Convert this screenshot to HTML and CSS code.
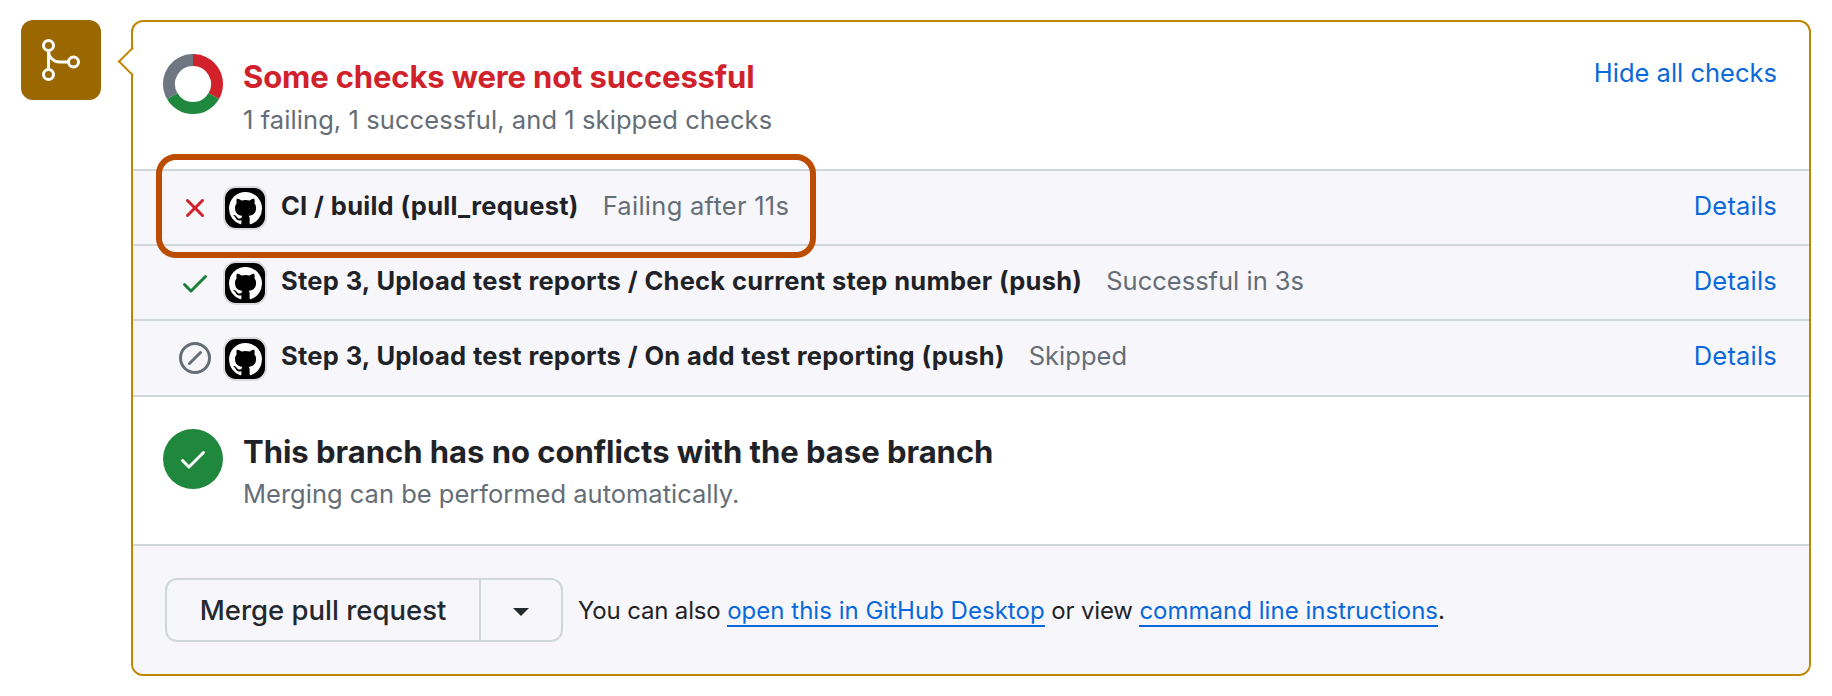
FILE: index.html
```html
<!DOCTYPE html>
<html lang="en">
<head>
<meta charset="utf-8">
<title>Pull request checks</title>
<link rel="stylesheet" href="styles.css">
</head>
<body>
<svg class="defs" aria-hidden="true">
  <symbol id="mark" viewBox="0 0 16 16"><path d="M8 0c4.42 0 8 3.58 8 8a8.013 8.013 0 0 1-5.45 7.59c-.4.08-.55-.17-.55-.38 0-.27.01-1.13.01-2.2 0-.75-.25-1.23-.54-1.48 1.78-.2 3.65-.88 3.65-3.95 0-.88-.31-1.59-.82-2.15.08-.2.36-1.02-.08-2.12 0 0-.67-.22-2.2.82-.64-.18-1.32-.27-2-.27-.68 0-1.36.09-2 .27-1.53-1.03-2.2-.82-2.2-.82-.44 1.1-.16 1.92-.08 2.12-.51.56-.82 1.28-.82 2.15 0 3.06 1.86 3.75 3.64 3.95-.23.2-.44.55-.51 1.07-.46.21-1.61.55-2.33-.66-.15-.24-.6-.83-1.23-.82-.67.01-.27.38.01.53.34.19.73.9.82 1.13.16.45.68 1.31 2.69.94 0 .67.01 1.3.01 1.49 0 .21-.15.45-.55.38A7.995 7.995 0 0 1 0 8c0-4.42 3.58-8 8-8Z"/></symbol>
  <symbol id="check" viewBox="0 0 16 16"><path d="M13.78 4.22a.75.75 0 0 1 0 1.06l-7.25 7.25a.75.75 0 0 1-1.06 0L2.22 9.28a.751.751 0 0 1 .018-1.042.751.751 0 0 1 1.042-.018L6 10.94l6.72-6.72a.75.75 0 0 1 1.06 0Z"/></symbol>
  <symbol id="x" viewBox="0 0 16 16"><path d="M3.72 3.72a.75.75 0 0 1 1.06 0L8 6.94l3.22-3.22a.749.749 0 0 1 1.275.326.749.749 0 0 1-.215.734L9.06 8l3.22 3.22a.749.749 0 0 1-.326 1.275.749.749 0 0 1-.734-.215L8 9.06l-3.22 3.22a.751.751 0 0 1-1.042-.018.751.751 0 0 1-.018-1.042L6.94 8 3.72 4.78a.75.75 0 0 1 0-1.06Z"/></symbol>
  <symbol id="skip" viewBox="0 0 16 16"><path d="M8 0a8 8 0 1 1 0 16A8 8 0 0 1 8 0ZM1.5 8a6.5 6.5 0 1 0 13 0 6.5 6.5 0 0 0-13 0Zm9.78-2.22-5.5 5.5a.749.749 0 0 1-1.275-.326.749.749 0 0 1 .215-.734l5.5-5.5a.751.751 0 0 1 1.042.018.751.751 0 0 1 .018 1.042Z"/></symbol>
</svg>
<main class="merge">
  <div class="badge">
    <svg class="badge-icon" viewBox="0 0 24 24"><circle cx="5.75" cy="4.75" r="2.5"/><circle cx="5.75" cy="19.25" r="2.5"/><circle cx="18.25" cy="13" r="2.5"/><path d="M5.75 16.5V7.5a5.5 5.5 0 0 0 5.5 5.5h4.25"/></svg>
  </div>
  <section class="panel">
    <header class="summary">
      <svg class="donut" viewBox="0 0 60 60">
        <path class="seg-fail" d="M30 6A24 24 0 0 1 50.78 42"/>
        <path class="seg-ok" d="M50.78 42A24 24 0 0 1 9.22 42"/>
        <path class="seg-skip" d="M9.22 42A24 24 0 0 1 30 6"/>
      </svg>
      <div class="summary-text">
        <h2 class="title title-fail">Some checks were not successful</h2>
        <p class="sub sub-checks">1 failing, 1 successful, and 1 skipped checks</p>
      </div>
      <a class="link toggle">Hide all checks</a>
    </header>
    <ul class="checks">
      <li class="check">
        <svg class="state fail"><use href="#x"/></svg>
        <span class="app"><svg class="mark"><use href="#mark"/></svg></span>
        <strong class="name">CI / build (pull_request)</strong>
        <span class="note note-fail">Failing after 11s</span>
        <a class="link details">Details</a>
        <span class="highlight"></span>
      </li>
      <li class="check">
        <svg class="state ok"><use href="#check"/></svg>
        <span class="app"><svg class="mark"><use href="#mark"/></svg></span>
        <strong class="name">Step 3, Upload test reports / Check current step number (push)</strong>
        <span class="note">Successful in 3s</span>
        <a class="link details">Details</a>
      </li>
      <li class="check">
        <svg class="state skipped"><use href="#skip"/></svg>
        <span class="app"><svg class="mark"><use href="#mark"/></svg></span>
        <strong class="name">Step 3, Upload test reports / On add test reporting (push)</strong>
        <span class="note">Skipped</span>
        <a class="link details">Details</a>
      </li>
    </ul>
    <div class="summary">
      <span class="disc"><svg class="disc-icon"><use href="#check"/></svg></span>
      <div class="summary-text">
        <h2 class="title title-branch">This branch has no conflicts with the base branch</h2>
        <p class="sub sub-merge">Merging can be performed automatically.</p>
      </div>
    </div>
    <footer class="actions">
      <div class="split">
        <button class="merge-btn">Merge pull request</button>
        <button class="menu-btn" aria-label="Select merge method"><svg class="caret" viewBox="0 0 16 8"><path d="M0 0h16L8 8z"/></svg></button>
      </div>
      <p class="hint">You can also <a class="link inline">open this in GitHub Desktop</a> or view <a class="link inline">command line instructions</a>.</p>
    </footer>
  </section>
</main>
</body>
</html>
```
FILE: styles.css
```css
* { box-sizing: border-box; }
body {
  margin: 0;
  background: #fff;
  color: #1f2328;
  font-family: Inter, "Liberation Sans", sans-serif;
  font-size: 25.5px;
}
h2, p, ul { margin: 0; padding: 0; }
svg { display: block; flex: none; fill: currentColor; }
.defs { position: absolute; width: 0; height: 0; }
.merge {
  display: flex;
  align-items: flex-start;
  gap: 30px;
  padding: 20px 21px;
}
.badge {
  display: grid;
  place-items: center;
  flex: none;
  width: 80px;
  height: 80px;
  border-radius: 12px;
  background: #9a6700;
}
.badge-icon { width: 48px; height: 48px; fill: none; stroke: #fff; stroke-width: 1.5; }
.panel {
  position: relative;
  flex: 1;
  height: 656px;
  border: 2px solid #bf8700;
  border-radius: 12px;
}
.panel::before {
  content: "";
  position: absolute;
  left: -11px;
  top: 28.5px;
  width: 19px;
  height: 19px;
  border: solid #bf8700;
  border-width: 0 0 2px 2px;
  background: linear-gradient(45deg, #fff 55%, transparent 55%);
  transform: rotate(45deg);
}
.summary {
  display: flex;
  align-items: flex-start;
  gap: 20px;
  height: 147px;
  padding: 32px 32px 0 30px;
}
.donut { width: 60px; height: 60px; fill: none; stroke-width: 12; }
.seg-fail { stroke: #d1222c; }
.seg-ok { stroke: #1f883d; }
.seg-skip { stroke: #6e7781; }
.summary-text { flex: 1; padding-top: 3px; }
.title { font-size: 31px; font-weight: 650; line-height: 40px; white-space: nowrap; }
.title-fail { color: #d1222c; letter-spacing: -0.14px; }
.title-branch { letter-spacing: -0.02px; }
.sub { margin-top: 4px; color: #656d76; line-height: 38px; white-space: nowrap; }
.sub-checks { letter-spacing: 0.08px; }
.sub-merge { margin-top: 3px; }
.link { color: #0969da; white-space: nowrap; }
.toggle { line-height: 38px; }
.checks { list-style: none; }
.check {
  position: relative;
  display: flex;
  align-items: flex-start;
  height: 75px;
  padding: 0 32px 0 46px;
  border-top: 2px solid #d0d7da;
  background: #f7f7fb;
  line-height: 70px;
  white-space: nowrap;
}
.check:last-child { height: 78px; border-bottom: 2px solid #d0d7da; }
.state { width: 32px; height: 32px; margin-top: 21px; }
.fail { color: #d1222c; }
.ok { color: #1a7f37; }
.skipped { color: #656d76; }
.app {
  display: grid;
  place-items: center;
  width: 44px;
  height: 44px;
  margin: 15px 14px 0 12px;
  border: 2px solid #d9dadc;
  border-radius: 13px;
  background: #000;
}
.check:last-child .app { margin-top: 16px; }
.mark { width: 33px; height: 33px; color: #fff; }
.name { font-weight: 650; letter-spacing: 0.25px; word-spacing: 0.3px; }
.note { margin-left: 24px; color: #656d76; }
.note-fail { letter-spacing: 0.27px; }
.details { margin-left: auto; letter-spacing: 0.2px; }
.highlight {
  position: absolute;
  z-index: 1;
  left: 23px;
  top: -17px;
  width: 660px;
  height: 104px;
  border: 6px solid #bc4c00;
  border-radius: 20px;
}
.disc {
  display: grid;
  place-items: center;
  flex: none;
  width: 60px;
  height: 60px;
  border-radius: 50%;
  background: #1f883d;
  color: #fff;
}
.disc-icon { width: 32px; height: 32px; }
.actions {
  display: flex;
  align-items: flex-start;
  gap: 15px;
  height: 130px;
  padding: 32px;
  border-top: 2px solid #d0d7da;
  border-radius: 0 0 10px 10px;
  background: #f7f7fb;
}
.split {
  display: flex;
  width: 398px;
  height: 64px;
  border: 2px solid #d0d7da;
  border-radius: 12px;
}
.split button { border: 0; padding: 0; background: none; color: #24292f; font-family: inherit; }
.split .merge-btn { width: 312px; font-size: 27.5px; font-weight: 500; line-height: 60px; white-space: nowrap; }
.split .menu-btn { display: grid; place-items: center; flex: 1; border-left: 2px solid #d0d7da; }
.caret { width: 16px; height: 8px; margin-top: 4px; }
.hint { font-size: 24px; line-height: 66px; letter-spacing: -0.16px; white-space: nowrap; }
.inline { display: inline-block; line-height: 29px; letter-spacing: 0.02px; border-bottom: 2px solid #0969da; }
```
